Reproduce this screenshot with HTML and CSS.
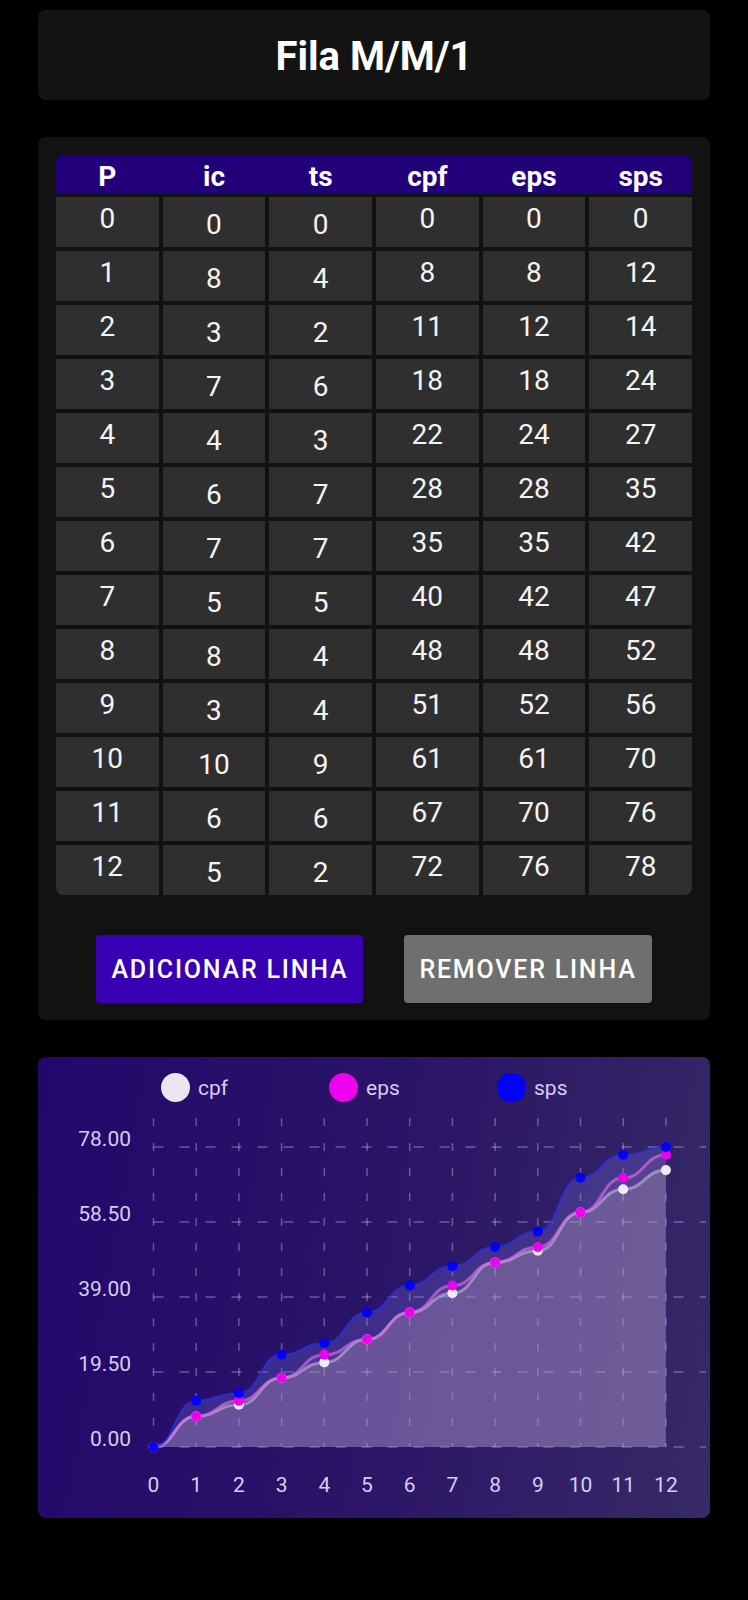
FILE: index.html
```html
<!DOCTYPE html>
<html lang="pt">
<head>
<meta charset="utf-8">
<title>Fila M/M/1</title>
<link rel="stylesheet" href="styles.css">
</head>
<body>
<main class="page">
  <header class="title-card">
    <h1 class="title">Fila M/M/1</h1>
  </header>

  <section class="table-card">
    <div class="table">
      <div class="thead">
        <div class="th">P</div><div class="th">ic</div><div class="th">ts</div><div class="th">cpf</div><div class="th">eps</div><div class="th">sps</div>
      </div>
      <div class="tbody">
        <div class="td">0</div><div class="td in">0</div><div class="td in">0</div><div class="td">0</div><div class="td">0</div><div class="td">0</div>
        <div class="td">1</div><div class="td in">8</div><div class="td in">4</div><div class="td">8</div><div class="td">8</div><div class="td">12</div>
        <div class="td">2</div><div class="td in">3</div><div class="td in">2</div><div class="td">11</div><div class="td">12</div><div class="td">14</div>
        <div class="td">3</div><div class="td in">7</div><div class="td in">6</div><div class="td">18</div><div class="td">18</div><div class="td">24</div>
        <div class="td">4</div><div class="td in">4</div><div class="td in">3</div><div class="td">22</div><div class="td">24</div><div class="td">27</div>
        <div class="td">5</div><div class="td in">6</div><div class="td in">7</div><div class="td">28</div><div class="td">28</div><div class="td">35</div>
        <div class="td">6</div><div class="td in">7</div><div class="td in">7</div><div class="td">35</div><div class="td">35</div><div class="td">42</div>
        <div class="td">7</div><div class="td in">5</div><div class="td in">5</div><div class="td">40</div><div class="td">42</div><div class="td">47</div>
        <div class="td">8</div><div class="td in">8</div><div class="td in">4</div><div class="td">48</div><div class="td">48</div><div class="td">52</div>
        <div class="td">9</div><div class="td in">3</div><div class="td in">4</div><div class="td">51</div><div class="td">52</div><div class="td">56</div>
        <div class="td">10</div><div class="td in">10</div><div class="td in">9</div><div class="td">61</div><div class="td">61</div><div class="td">70</div>
        <div class="td">11</div><div class="td in">6</div><div class="td in">6</div><div class="td">67</div><div class="td">70</div><div class="td">76</div>
        <div class="td">12</div><div class="td in">5</div><div class="td in">2</div><div class="td">72</div><div class="td">76</div><div class="td">78</div>
      </div>
    </div>
    <div class="actions">
      <button class="btn btn-add">Adicionar linha</button>
      <button class="btn btn-remove">Remover linha</button>
    </div>
  </section>

  <section class="chart-card">
    <div class="legend">
      <div class="legend-item"><span class="dot dot-cpf"></span><span class="legend-label">cpf</span></div>
      <div class="legend-item"><span class="dot dot-eps"></span><span class="legend-label">eps</span></div>
      <div class="legend-item"><span class="dot dot-sps"></span><span class="legend-label">sps</span></div>
    </div>
    <svg class="plot" width="672" height="416" viewBox="0 0 672 416" xmlns="http://www.w3.org/2000/svg">
      <g class="grid-v">
        <line x1="115.5" y1="16" x2="115.5" y2="345"/>
        <line x1="158.2" y1="16" x2="158.2" y2="345"/>
        <line x1="200.9" y1="16" x2="200.9" y2="345"/>
        <line x1="243.6" y1="16" x2="243.6" y2="345"/>
        <line x1="286.3" y1="16" x2="286.3" y2="345"/>
        <line x1="329" y1="16" x2="329" y2="345"/>
        <line x1="371.7" y1="16" x2="371.7" y2="345"/>
        <line x1="414.4" y1="16" x2="414.4" y2="345"/>
        <line x1="457.1" y1="16" x2="457.1" y2="345"/>
        <line x1="499.8" y1="16" x2="499.8" y2="345"/>
        <line x1="542.5" y1="16" x2="542.5" y2="345"/>
        <line x1="585.2" y1="16" x2="585.2" y2="345"/>
        <line x1="627.9" y1="16" x2="627.9" y2="345"/>
      </g>
      <g class="grid-h">
        <line x1="115.5" y1="45" x2="668" y2="45"/>
        <line x1="115.5" y1="120" x2="668" y2="120"/>
        <line x1="115.5" y1="195" x2="668" y2="195"/>
        <line x1="115.5" y1="270" x2="668" y2="270"/>
        <line x1="115.5" y1="345" x2="668" y2="345"/>
      </g>
      <g class="axis-y">
        <text x="93" y="44">78.00</text>
        <text x="93" y="119">58.50</text>
        <text x="93" y="194">39.00</text>
        <text x="93" y="269">19.50</text>
        <text x="93" y="344">0.00</text>
      </g>
      <g class="axis-x">
        <text x="115.5" y="390">0</text>
        <text x="158.2" y="390">1</text>
        <text x="200.9" y="390">2</text>
        <text x="243.6" y="390">3</text>
        <text x="286.3" y="390">4</text>
        <text x="329" y="390">5</text>
        <text x="371.7" y="390">6</text>
        <text x="414.4" y="390">7</text>
        <text x="457.1" y="390">8</text>
        <text x="499.8" y="390">9</text>
        <text x="542.5" y="390">10</text>
        <text x="585.2" y="390">11</text>
        <text x="627.9" y="390">12</text>
      </g>

      <path class="fill-sps" d="M115.5 345 C136.85 345 136.85 298.8 158.2 298.8 C179.55 298.8 179.55 291.2 200.9 291.2 C222.25 291.2 222.25 252.7 243.6 252.7 C264.95 252.7 264.95 241.2 286.3 241.2 C307.65 241.2 307.65 210.4 329 210.4 C350.35 210.4 350.35 183.5 371.7 183.5 C393.05 183.5 393.05 164.2 414.4 164.2 C435.75 164.2 435.75 145 457.1 145 C478.45 145 478.45 129.6 499.8 129.6 C521.15 129.6 521.15 75.8 542.5 75.8 C563.85 75.8 563.85 52.7 585.2 52.7 C606.55 52.7 606.55 45 627.9 45 L627.9 345 L115.5 345 Z"/>
      <path class="fill-eps" d="M115.5 345 C136.85 345 136.85 314.2 158.2 314.2 C179.55 314.2 179.55 298.8 200.9 298.8 C222.25 298.8 222.25 275.8 243.6 275.8 C264.95 275.8 264.95 252.7 286.3 252.7 C307.65 252.7 307.65 237.3 329 237.3 C350.35 237.3 350.35 210.4 371.7 210.4 C393.05 210.4 393.05 183.5 414.4 183.5 C435.75 183.5 435.75 160.4 457.1 160.4 C478.45 160.4 478.45 145 499.8 145 C521.15 145 521.15 110.4 542.5 110.4 C563.85 110.4 563.85 75.8 585.2 75.8 C606.55 75.8 606.55 52.7 627.9 52.7 L627.9 345 L115.5 345 Z"/>
      <path class="fill-cpf" d="M115.5 345 C136.85 345 136.85 314.2 158.2 314.2 C179.55 314.2 179.55 302.7 200.9 302.7 C222.25 302.7 222.25 275.8 243.6 275.8 C264.95 275.8 264.95 260.4 286.3 260.4 C307.65 260.4 307.65 237.3 329 237.3 C350.35 237.3 350.35 210.4 371.7 210.4 C393.05 210.4 393.05 191.2 414.4 191.2 C435.75 191.2 435.75 160.4 457.1 160.4 C478.45 160.4 478.45 148.8 499.8 148.8 C521.15 148.8 521.15 110.4 542.5 110.4 C563.85 110.4 563.85 87.3 585.2 87.3 C606.55 87.3 606.55 68.1 627.9 68.1 L627.9 345 L115.5 345 Z"/>

      <path class="line-cpf" d="M115.5 345 C136.85 345 136.85 314.2 158.2 314.2 C179.55 314.2 179.55 302.7 200.9 302.7 C222.25 302.7 222.25 275.8 243.6 275.8 C264.95 275.8 264.95 260.4 286.3 260.4 C307.65 260.4 307.65 237.3 329 237.3 C350.35 237.3 350.35 210.4 371.7 210.4 C393.05 210.4 393.05 191.2 414.4 191.2 C435.75 191.2 435.75 160.4 457.1 160.4 C478.45 160.4 478.45 148.8 499.8 148.8 C521.15 148.8 521.15 110.4 542.5 110.4 C563.85 110.4 563.85 87.3 585.2 87.3 C606.55 87.3 606.55 68.1 627.9 68.1"/>
      <path class="line-eps" d="M115.5 345 C136.85 345 136.85 314.2 158.2 314.2 C179.55 314.2 179.55 298.8 200.9 298.8 C222.25 298.8 222.25 275.8 243.6 275.8 C264.95 275.8 264.95 252.7 286.3 252.7 C307.65 252.7 307.65 237.3 329 237.3 C350.35 237.3 350.35 210.4 371.7 210.4 C393.05 210.4 393.05 183.5 414.4 183.5 C435.75 183.5 435.75 160.4 457.1 160.4 C478.45 160.4 478.45 145 499.8 145 C521.15 145 521.15 110.4 542.5 110.4 C563.85 110.4 563.85 75.8 585.2 75.8 C606.55 75.8 606.55 52.7 627.9 52.7"/>
      <path class="line-sps" d="M115.5 345 C136.85 345 136.85 298.8 158.2 298.8 C179.55 298.8 179.55 291.2 200.9 291.2 C222.25 291.2 222.25 252.7 243.6 252.7 C264.95 252.7 264.95 241.2 286.3 241.2 C307.65 241.2 307.65 210.4 329 210.4 C350.35 210.4 350.35 183.5 371.7 183.5 C393.05 183.5 393.05 164.2 414.4 164.2 C435.75 164.2 435.75 145 457.1 145 C478.45 145 478.45 129.6 499.8 129.6 C521.15 129.6 521.15 75.8 542.5 75.8 C563.85 75.8 563.85 52.7 585.2 52.7 C606.55 52.7 606.55 45 627.9 45"/>

      <g class="pts-cpf">
        <circle cx="115.5" cy="345" r="5"/><circle cx="158.2" cy="314.2" r="5"/><circle cx="200.9" cy="302.7" r="5"/><circle cx="243.6" cy="275.8" r="5"/><circle cx="286.3" cy="260.4" r="5"/><circle cx="329" cy="237.3" r="5"/><circle cx="371.7" cy="210.4" r="5"/><circle cx="414.4" cy="191.2" r="5"/><circle cx="457.1" cy="160.4" r="5"/><circle cx="499.8" cy="148.8" r="5"/><circle cx="542.5" cy="110.4" r="5"/><circle cx="585.2" cy="87.3" r="5"/><circle cx="627.9" cy="68.1" r="5"/>
      </g>
      <g class="pts-eps">
        <circle cx="115.5" cy="345" r="5"/><circle cx="158.2" cy="314.2" r="5"/><circle cx="200.9" cy="298.8" r="5"/><circle cx="243.6" cy="275.8" r="5"/><circle cx="286.3" cy="252.7" r="5"/><circle cx="329" cy="237.3" r="5"/><circle cx="371.7" cy="210.4" r="5"/><circle cx="414.4" cy="183.5" r="5"/><circle cx="457.1" cy="160.4" r="5"/><circle cx="499.8" cy="145" r="5"/><circle cx="542.5" cy="110.4" r="5"/><circle cx="585.2" cy="75.8" r="5"/><circle cx="627.9" cy="52.7" r="5"/>
      </g>
      <g class="pts-sps">
        <circle cx="115.5" cy="345" r="5"/><circle cx="158.2" cy="298.8" r="5"/><circle cx="200.9" cy="291.2" r="5"/><circle cx="243.6" cy="252.7" r="5"/><circle cx="286.3" cy="241.2" r="5"/><circle cx="329" cy="210.4" r="5"/><circle cx="371.7" cy="183.5" r="5"/><circle cx="414.4" cy="164.2" r="5"/><circle cx="457.1" cy="145" r="5"/><circle cx="499.8" cy="129.6" r="5"/><circle cx="542.5" cy="75.8" r="5"/><circle cx="585.2" cy="52.7" r="5"/><circle cx="627.9" cy="45" r="5"/>
      </g>
    </svg>
  </section>
</main>
</body>
</html>
```

FILE: styles.css
```css
* { box-sizing: border-box; }

body {
  margin: 0;
  background: #000;
  color: #fff;
  font-family: Roboto, "Noto Sans", "Liberation Sans", sans-serif;
}

.page {
  width: 748px;
  padding: 10px 38px 0;
}

.title-card {
  height: 90px;
  background: #131313;
  border-radius: 8px;
  display: flex;
  align-items: center;
  justify-content: center;
}

.title {
  margin: 0;
  padding-top: 4px;
  font-size: 40px;
  font-weight: 700;
  line-height: 1.15;
}

.table-card {
  margin-top: 37px;
  background: #121212;
  border-radius: 8px;
  padding: 18px 18px 17px;
}

.table {
  border-radius: 8px;
  overflow: hidden;
}

.thead {
  display: grid;
  grid-template-columns: repeat(6, 1fr);
  column-gap: 4px;
  height: 39px;
  background: #21007a;
}

.th {
  text-align: center;
  font-size: 28px;
  font-weight: 700;
  line-height: 39px;
  padding-top: 2px;
}

.tbody {
  display: grid;
  grid-template-columns: repeat(6, 1fr);
  gap: 4px;
  margin-top: 3px;
}

.td {
  height: 50px;
  background: #2f2f2f;
  text-align: center;
  font-size: 28px;
  line-height: 33px;
  padding-top: 5px;
  color: #f4f4f4;
}

.td.in {
  padding-top: 11px;
}

.actions {
  display: flex;
  justify-content: center;
  gap: 41px;
  margin-top: 40px;
}

.btn {
  height: 68px;
  border: 0;
  border-radius: 4px;
  padding: 0 15px;
  font-family: Roboto, "Noto Sans", sans-serif;
  font-size: 25px;
  font-weight: 500;
  letter-spacing: 1.8px;
  text-transform: uppercase;
  color: #fff;
}

.btn-add { background: #3700b3; }
.btn-remove { background: #6f6f6f; }

.chart-card {
  margin-top: 37px;
  border-radius: 8px;
  padding-top: 16px;
  background: linear-gradient(100deg, #22086c 0%, #2a1467 50%, #372a66 100%);
  overflow: hidden;
}

.legend {
  display: flex;
  height: 29px;
  padding-left: 123px;
}

.legend-item {
  width: 168px;
  display: flex;
  align-items: center;
  gap: 8px;
}

.dot {
  width: 29px;
  height: 29px;
  border-radius: 50%;
}

.dot-cpf { background: #e9e6f0; }
.dot-eps { background: #ee00ee; }
.dot-sps { background: #0000ff; }

.legend-label {
  font-size: 21px;
  color: #d6cdef;
}

.plot {
  display: block;
}

.grid-v line {
  stroke: rgba(255, 255, 255, 0.3);
  stroke-width: 1.5;
  stroke-dasharray: 8 17;
}

.grid-h line {
  stroke: rgba(255, 255, 255, 0.3);
  stroke-width: 1.5;
  stroke-dasharray: 10 16;
}

.axis-y text {
  font-family: Roboto, sans-serif;
  font-size: 21px;
  fill: #d6cdef;
  text-anchor: end;
}

.axis-x text {
  font-family: Roboto, sans-serif;
  font-size: 21px;
  fill: #d6cdef;
  text-anchor: middle;
}

.fill-sps { fill: rgba(120, 110, 230, 0.28); }
.fill-eps { fill: rgba(220, 120, 230, 0.12); }
.fill-cpf { fill: rgba(190, 190, 170, 0.22); }

.line-cpf, .line-eps, .line-sps { fill: none; }
.line-cpf { stroke: rgba(200, 195, 220, 0.55); stroke-width: 3; }
.line-eps { stroke: rgba(215, 110, 230, 0.65); stroke-width: 3; }
.line-sps { stroke: rgba(40, 50, 230, 0.8); stroke-width: 2; }

.pts-cpf circle { fill: #eeebf4; }
.pts-eps circle { fill: #ee00ee; }
.pts-sps circle { fill: #0000ff; }
```
